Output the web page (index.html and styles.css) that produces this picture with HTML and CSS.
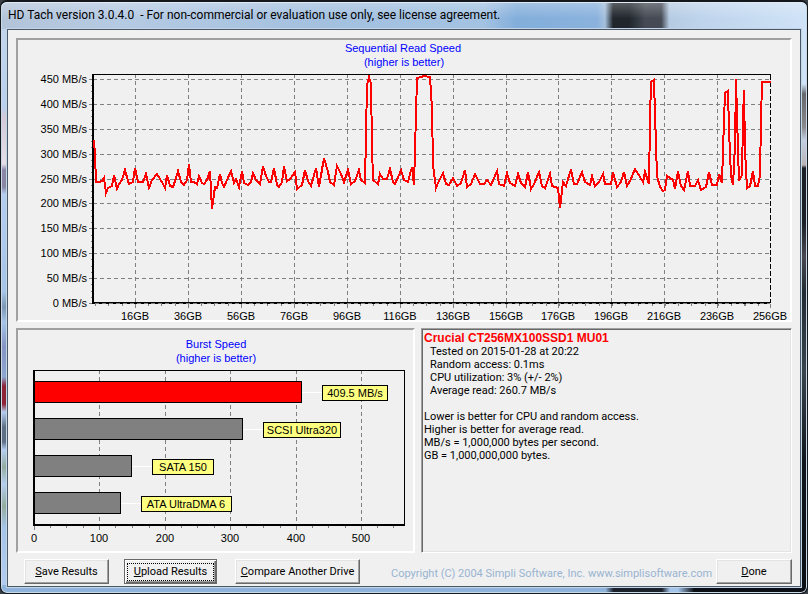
FILE: index.html
```
<!DOCTYPE html>
<html lang="en">
<head>
  <meta charset="UTF-8">
  <meta name="viewport" content="width=device-width, initial-scale=1.0">
  <title>HD Tach version 3.0.4.0</title>
  <link rel="stylesheet" href="styles.css">
</head>
<body>
  <div class="window">
    <header class="titlebar">
      <h1>HD Tach version 3.0.4.0 &nbsp;- For non-commercial or evaluation use only, see license agreement.</h1>
    </header>

    <main class="client">
      <section class="panel">
        <svg class="chart" viewBox="18 40 772 280" role="img" aria-label="Sequential Read Speed">
          <g class="chart-title">
            <text x="403" y="52">Sequential Read Speed</text>
            <text x="404" y="66">(higher is better)</text>
          </g>

          <!-- horizontal and vertical grid -->
          <path class="grid" d="M93 79.5H770M93 104.5H770M93 129.5H770M93 154.5H770M93 179.5H770M93 203.5H770M93 228.5H770M93 253.5H770M93 278.5H770"/>
          <path class="grid" d="M135.5 74V302M188.5 74V302M241.5 74V302M294.5 74V302M347.5 74V302M400.5 74V302M453.5 74V302M506.5 74V302M558.5 74V302M611.5 74V302M664.5 74V302M717.5 74V302"/>

          <!-- ticks -->
          <path class="tick" d="M89 79.5H92M89 104.5H92M89 129.5H92M89 154.5H92M89 179.5H92M89 203.5H92M89 228.5H92M89 253.5H92M89 278.5H92M89 303.5H92"/>
          <path class="tick-y" pathLength="216" d="M91.5 79V303"/>
          <path class="tick-x" pathLength="663" d="M95 304.5H771"/>
          <path class="tick" d="M135.5 304V308M188.5 304V308M241.5 304V308M294.5 304V308M347.5 304V308M400.5 304V308M453.5 304V308M506.5 304V308M558.5 304V308M611.5 304V308M664.5 304V308M717.5 304V308M770.5 304V308"/>

          <path class="frame" d="M92 74.5H771"/>
          <path class="frame dashed" d="M770.5 75V303"/>
          <path class="axis" d="M93 74V303H770"/>
          <path class="grid" d="M95 303.5H770"/>

          <polyline class="speed" points="
            94,140 95,155 96,182 99,182 102,181 104,178 106,193 108,188 112,186 114,175 117,189 119,184 122,180
            125,170 128,181 129,184 133,182 135,168 138,182 143,182 146,174 149,188 152,180 157,174 160,179 163,184
            165,188 167,175 170,186 173,187 176,178 178,171 181,182 184,185 187,180 189,164 191,182 194,182 197,184
            199,176 202,183 204,184 207,180 210,171 212,209 215,187 217,188 220,174 222,183 224,187 227,180 231,171
            234,183 236,179 239,187 242,171 244,183 248,185 251,182 253,173 256,180 260,184 263,166 266,176 269,182
            271,182 274,168 277,185 279,187 282,182 284,166 287,181 290,179 295,172 297,189 302,185 305,170 308,181
            311,186 316,168 319,187 324,158 328,172 330,182 334,185 337,166 341,174 344,182 348,170 351,184 355,181
            359,170 361,180 365,183 366,134 367,85 369,77 371,84 372,145 373,180 378,184 380,174 383,179 387,179
            390,169 393,182 395,184 399,175 401,170 404,180 408,182 410,174 412,167 414,185 415,150 417,78 421,77
            424,76 430,77 432,108 433,165 436,188 438,183 443,173 446,184 449,185 453,178 457,186 461,183 465,170
            467,187 471,184 475,174 480,184 484,184 487,180 491,185 497,171 499,184 504,186 507,173 510,183 515,186
            518,174 521,183 525,187 528,172 531,189 534,184 539,172 542,186 545,188 550,174 552,186 558,188 560,208
            563,182 566,186 571,169 574,184 577,184 582,172 585,182 590,185 592,176 595,186 599,182 603,174 605,184
            611,184 613,172 617,187 621,182 624,172 627,186 631,179 635,169 640,177 643,182 645,172 649,184 650,120
            651,82 654,80 655,114 657,176 660,187 663,191 665,190 667,176 673,180 675,189 678,171 681,186 684,190
            688,171 690,186 695,186 698,180 701,190 706,187 709,172 712,185 717,185 719,174 722,183 723,150 725,93
            728,91 729,130 731,176 733,185 735,145 736,79 738,150 739,181 742,175 743,119 744,90 745,150 747,188
            750,186 753,171 755,186 758,186 760,175 761,120 762,82 771,82"/>

          <g class="label-y">
            <text x="87" y="83">450 MB/s</text>
            <text x="87" y="108">400 MB/s</text>
            <text x="87" y="133">350 MB/s</text>
            <text x="87" y="158">300 MB/s</text>
            <text x="87" y="183">250 MB/s</text>
            <text x="87" y="207">200 MB/s</text>
            <text x="87" y="232">150 MB/s</text>
            <text x="87" y="257">100 MB/s</text>
            <text x="87" y="282">50 MB/s</text>
            <text x="87" y="307">0 MB/s</text>
          </g>
          <g class="label-x">
            <text x="135" y="320">16GB</text>
            <text x="188" y="320">36GB</text>
            <text x="241" y="320">56GB</text>
            <text x="294" y="320">76GB</text>
            <text x="347" y="320">96GB</text>
            <text x="400" y="320">116GB</text>
            <text x="453" y="320">136GB</text>
            <text x="506" y="320">156GB</text>
            <text x="558" y="320">176GB</text>
            <text x="611" y="320">196GB</text>
            <text x="664" y="320">216GB</text>
            <text x="717" y="320">236GB</text>
            <text x="770" y="320">256GB</text>
          </g>
        </svg>
      </section>

      <div class="row">
        <section class="panel">
          <svg class="chart" viewBox="18 330 395 221" role="img" aria-label="Burst Speed">
            <g class="chart-title">
              <text x="216" y="348">Burst Speed</text>
              <text x="216" y="362">(higher is better)</text>
            </g>

            <path class="grid" d="M99.5 370V524M165.5 370V524M230.5 370V524M296.5 370V524M361.5 370V524"/>
            <path class="frame" d="M33 370.5H404.5V526"/>
            <path class="tick" d="M34.5 526V530M99.5 526V530M165.5 526V530M230.5 526V530M296.5 526V530M361.5 526V530"/>
            <path class="tick" d="M50.5 526V528M66.5 526V528M83.5 526V528M115.5 526V528M132.5 526V528M149.5 526V528M181.5 526V528M197.5 526V528M214.5 526V528M246.5 526V528M263.5 526V528M280.5 526V528M312.5 526V528M328.5 526V528M345.5 526V528M377.5 526V528M393.5 526V528"/>

            <g class="bars">
              <rect class="current" x="34.5" y="381.5" width="267" height="21"/>
              <rect x="34.5" y="418.5" width="208" height="21"/>
              <rect x="34.5" y="455.5" width="97" height="21"/>
              <rect x="34.5" y="492.5" width="86" height="21"/>
            </g>
            <path class="axis" d="M34 370V525H405"/>
            <path class="connector" d="M302 392.5H322M243 429.5H263M132 466.5H152M121 503.5H141"/>

            <g class="marks">
              <rect x="322.5" y="385.5" width="65" height="15"/>
              <rect x="263.5" y="422.5" width="77" height="15"/>
              <rect x="152.5" y="459.5" width="61" height="15"/>
              <rect x="141.5" y="496.5" width="90" height="15"/>
            </g>
            <g class="label-x">
              <text x="355" y="397">409.5 MB/s</text>
              <text x="302" y="434">SCSI Ultra320</text>
              <text x="183" y="471">SATA 150</text>
              <text x="186" y="508">ATA UltraDMA 6</text>
              <text x="34" y="542">0</text>
              <text x="99" y="542">100</text>
              <text x="165" y="542">200</text>
              <text x="230" y="542">300</text>
              <text x="296" y="542">400</text>
              <text x="361" y="542">500</text>
            </g>
          </svg>
        </section>

        <section class="info">
          <h2>Crucial CT256MX100SSD1 MU01</h2>
          <ul>
            <li>Tested on 2015-01-28 at 20:22</li>
            <li>Random access: 0.1ms</li>
            <li>CPU utilization: 3% (+/- 2%)</li>
            <li>Average read: 260.7 MB/s</li>
          </ul>
          <p>Lower is better for CPU and random access.<br>
          Higher is better for average read.<br>
          MB/s = 1,000,000 bytes per second.<br>
          GB = 1,000,000,000 bytes.</p>
        </section>
      </div>

      <footer class="actions">
        <button type="button" class="save"><u>S</u>ave Results</button>
        <button type="button" class="upload"><span class="focus"><u>U</u>pload Results</span></button>
        <button type="button" class="compare"><u>C</u>ompare Another Drive</button>
        <p class="copyright">Copyright (C) 2004 Simpli Software, Inc. www.simplisoftware.com</p>
        <button type="button" class="done"><u>D</u>one</button>
      </footer>
    </main>
  </div>
</body>
</html>
```
FILE: styles.css
```
* {
  box-sizing: border-box;
}

body {
  margin: 0;
  background: #3a4048;
  font-family: Roboto, "Liberation Sans", Arial, sans-serif;
  font-size: 11px;
  line-height: 13px;
  color: #000;
}

h1, h2, p, ul {
  margin: 0;
  padding: 0;
}

.window {
  display: flex;
  flex-direction: column;
  min-height: 100vh;
  padding: 0 6px 6px;
  border: 1px solid #14171c;
  border-top-width: 2px;
  border-radius: 7px;
  box-shadow: inset 0 0 0 1px #c9dbe9;
  background:
    linear-gradient(to right, #8fb3db 0, #8fb3db 75%, #1c222c 76%, #1c222c 82%, #a4c4ea 83%, #a4c4ea 84%, #0c1016 86%) bottom / 100% 8px no-repeat,
    linear-gradient(to bottom, #cfe2f7 0, #cfe2f7 82px, #66686c 92px, #8a898c 125px, #c4cfe2 138px, #b9b3b4 163px, #1b2026 166px, #1b2026 220px, #4a4850 255px, #232c32 290px, #39454b 370px, #10161c 460px, #0b0f14 100%) right / 8px 100% no-repeat,
    linear-gradient(to bottom, #c5d6ea 0, #b9d0ee 105px, #d3c9d8 115px, #e6dfe8 162px, #8a86a6 168px, #8a86a6 185px, #b4cdf0 192px, #a5c4e6 290px, #7d96b4 305px, #a5c4e6 320px, #8594c4 345px, #8ea6d0 375px, #8e2436 384px, #8e2436 402px, #b4cdf0 410px, #5f7086 425px, #5f7086 440px, #b4cdf0 448px, #94ac9e 465px, #b4cdf0 482px, #94ac9e 504px, #a5c4e6 525px, #b4cdf0 100%) left / 8px 100% no-repeat;
}

.titlebar {
  height: 27px;
  margin: 0 -5px;
  padding: 0 0 0 6px;
  border-top: 1px solid #dfeaf5;
  border-radius: 6px 6px 0 0;
  background:
    linear-gradient(to bottom, rgba(255, 255, 255, 0.25), rgba(255, 255, 255, 0) 60%),
    linear-gradient(to right, #b3c4d9 0, #b5cae3 15%, #a3c0df 40%, #a3c2e2 60%, #83aedb 64%, #8ab2dd 74%, #a5c0dc 75%, #20262c 76%, #20262c 78%, #454a54 80%, #454a54 82%, #b5cbe2 83%, #bed4ec 87%, #cfe2f7 100%);
}

.titlebar h1 {
  font-size: 12px;
  font-weight: 400;
  line-height: 25px;
  white-space: nowrap;
}

.client {
  display: flex;
  flex-direction: column;
  flex: 1;
  gap: 6px;
  padding: 8px;
  padding-bottom: 2px;
  border: 1px solid #4a5868;
  box-shadow: 0 0 0 1px #c2d5e6;
  background: #f0f0f0;
}

.panel {
  border: 2px solid;
  border-color: #a0a0a0 #fff #fff #a0a0a0;
}

.row {
  display: grid;
  grid-template-columns: 399fr 371fr;
  gap: 6px;
}

.chart {
  display: block;
  width: 100%;
  height: auto;
  font-family: "Liberation Sans", Arial, sans-serif;
  font-size: 11px;
  overflow: visible;
}

.chart path,
.chart polyline,
.chart rect {
  shape-rendering: crispEdges;
}

.chart-title {
  fill: #0000ff;
  text-anchor: middle;
}

.label-y {
  text-anchor: end;
}

.label-x {
  text-anchor: middle;
}

.grid {
  fill: none;
  stroke: #808080;
  stroke-dasharray: 4 3;
}

.tick {
  stroke: #808080;
}

.tick-x,
.tick-y {
  stroke: #808080;
}

.tick-x {
  stroke-width: 3;
  stroke-dasharray: 1 12;
}

.tick-y {
  stroke-dasharray: 1 5;
}

.frame {
  fill: none;
  stroke: #000;
}

.dashed {
  stroke-dasharray: 5 2;
}

.axis {
  fill: none;
  stroke: #000;
  stroke-width: 2;
}

.speed {
  fill: none;
  stroke: #ff0000;
  stroke-width: 2;
}

.bars rect {
  fill: #808080;
  stroke: #000;
}

.bars .current {
  fill: #ff0000;
}

.connector {
  stroke: #fff;
}

.marks rect {
  fill: #ffff80;
  stroke: #000;
}

.info {
  padding: 3px 1px;
  border: 1px solid;
  border-color: #a0a0a0 #fff #fff #a0a0a0;
  box-shadow: inset 1px 1px 0 #696969, inset -1px -1px 0 #e3e3e3;
}

.info h2 {
  padding-left: 1px;
  font-family: "Liberation Sans", Arial, sans-serif;
  font-size: 12px;
  line-height: 13px;
  color: #ff0000;
}

.info ul {
  padding-left: 7px;
  list-style: none;
}

.info p {
  margin-top: 13px;
  padding-left: 1px;
}

.actions {
  display: flex;
  align-items: flex-start;
  padding-left: 8px;
}

button {
  height: 25px;
  padding: 0;
  border: 1px solid;
  border-color: #fff #696969 #696969 #fff;
  box-shadow: inset -1px -1px 0 #a0a0a0, inset 1px 1px 0 #e3e3e3;
  background: #f0f0f0;
  font: inherit;
  color: #000;
  white-space: nowrap;
}

.save {
  width: 85px;
}

.upload {
  width: 93px;
  margin-left: 15px;
  padding: 2px;
  border: 1px solid #696969;
  box-shadow: inset 1px 1px 0 #fff, inset -1px -1px 0 #696969, inset -2px -2px 0 #a0a0a0;
}

.focus {
  display: block;
  border: 1px dotted #000;
  line-height: 16px;
}

.compare {
  width: 125px;
  margin-left: 18px;
}

.copyright {
  flex: 1;
  padding: 8px 0 0 31px;
  color: #99b4d1;
  white-space: nowrap;
}

.done {
  width: 76px;
}
```
